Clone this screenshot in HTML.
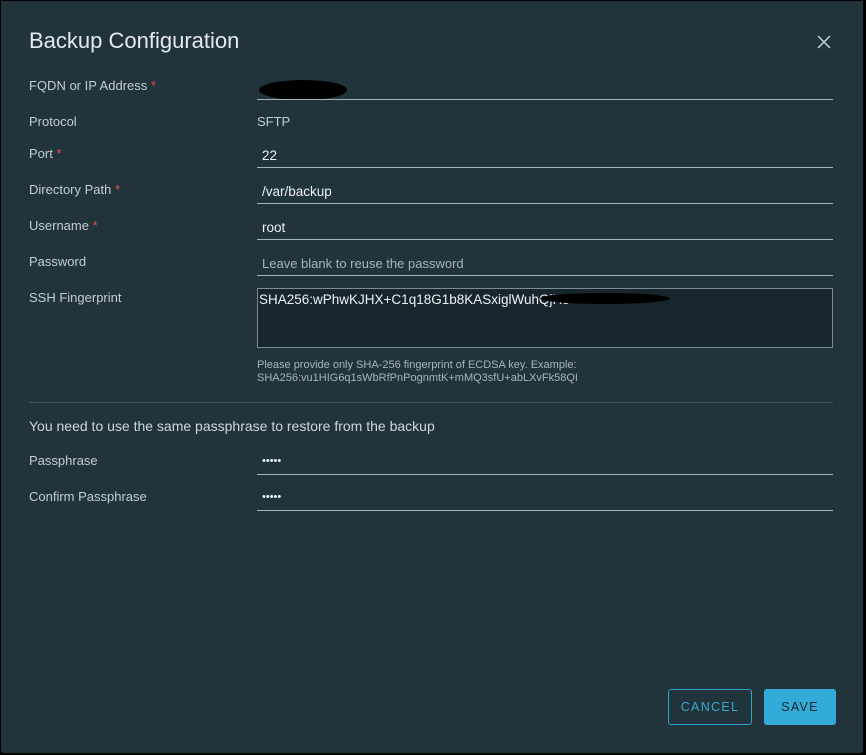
<!DOCTYPE html><html><head><style>
body{margin:0;background:#000;width:866px;height:755px;overflow:hidden;font-family:"Liberation Sans",sans-serif}
.m{position:absolute;left:1px;top:1px;width:862px;height:752px;background:#21333b;border-radius:0 0 3px 3px}
.t{position:absolute;color:#e8ecee}
.l{position:absolute;left:29px;font-size:13px;color:#c6cdd1}
.s{color:#e0504a}
.u{position:absolute;left:257px;width:576px;height:1px;background:#a6b4ba}
.v{position:absolute;left:262px;font-size:13.5px;color:#eef2f3}
</style></head><body><div class="m"></div>
<div class="t" style="left:29px;top:28px;font-size:22px;color:#e6eaec">Backup Configuration</div>
<svg style="position:absolute;left:817px;top:35px" width="14" height="14"><path d="M1 1L13 13M13 1L1 13" stroke="#c9d1d5" stroke-width="1.5"/></svg>
<div class="l" style="top:78px">FQDN or IP Address <span class="s">*</span></div>
<div style="position:absolute;left:259px;top:80px;width:88px;height:20px;background:#000;border-radius:50%"></div>
<div class="u" style="top:99px"></div>
<div class="l" style="top:114px">Protocol</div>
<div class="v" style="top:114px;left:257px;font-size:13px;color:#c6cdd1">SFTP</div>
<div class="l" style="top:146px">Port <span class="s">*</span></div>
<div class="v" style="top:148px">22</div><div class="u" style="top:167px"></div>
<div class="l" style="top:182px">Directory Path <span class="s">*</span></div>
<div class="v" style="top:184px">/var/backup</div><div class="u" style="top:203px"></div>
<div class="l" style="top:218px">Username <span class="s">*</span></div>
<div class="v" style="top:220px">root</div><div class="u" style="top:239px"></div>
<div class="l" style="top:254px">Password</div>
<div class="v" style="top:256px;font-size:13px;color:#aab5ba">Leave blank to reuse the password</div><div class="u" style="top:275px"></div>
<div class="l" style="top:290px">SSH Fingerprint</div>
<div style="position:absolute;left:257px;top:288px;width:574px;height:58px;border:1px solid #7d8c93;background:#17252c"></div>
<div class="v" style="top:292px;left:259px">SHA256:wPhwKJHX+C1q18G1b8KASxiglWuhQjH5</div>
<div style="position:absolute;left:540px;top:293px;width:130px;height:11px;background:#000;border-radius:50%"></div>
<div style="position:absolute;left:257px;top:359px;font-size:11px;line-height:13px;color:#aab5ba">Please provide only SHA-256 fingerprint of ECDSA key. Example:<br>SHA256:vu1HIG6q1sWbRfPnPognmtK+mMQ3sfU+abLXvFk58QI</div>
<div style="position:absolute;left:29px;top:402px;width:804px;height:1px;background:#43555d"></div>
<div class="l" style="top:418px;font-size:14px;color:#d0d7da">You need to use the same passphrase to restore from the backup</div>
<div class="l" style="top:453px">Passphrase</div>
<div class="v" style="top:455px;font-size:11px">•••••</div><div class="u" style="top:474px"></div>
<div class="l" style="top:489px">Confirm Passphrase</div>
<div class="v" style="top:491px;font-size:11px">•••••</div><div class="u" style="top:510px"></div>
<div style="position:absolute;left:668px;top:689px;width:82px;height:34px;border:1px solid #2ea3d2;border-radius:3px;color:#3aa8d6;font-size:12.5px;letter-spacing:1.3px;text-align:center;line-height:34px">CANCEL</div>
<div style="position:absolute;left:764px;top:689px;width:72px;height:36px;background:#33abd8;border-radius:3px;color:#12232b;font-size:12.5px;letter-spacing:1.3px;text-align:center;line-height:36px">SAVE</div>
</body></html>
